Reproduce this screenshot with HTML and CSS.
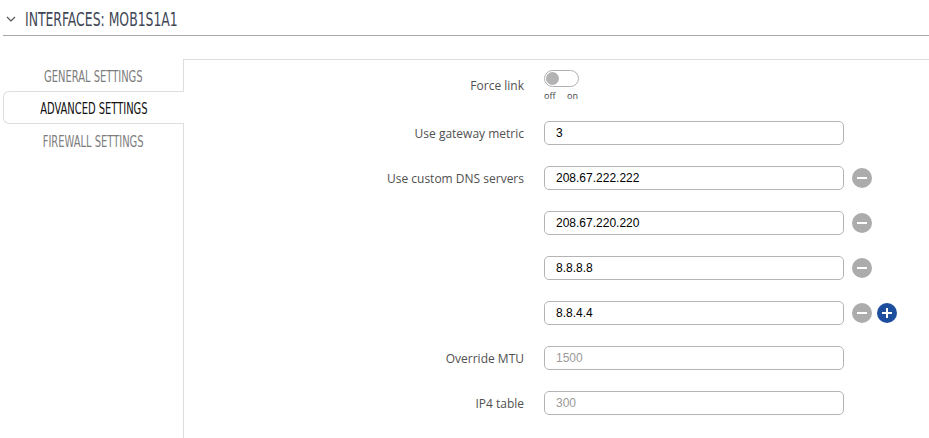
FILE: index.html
```html
<!DOCTYPE html>
<html><head><meta charset="UTF-8">
<title>Interfaces: mob1s1a1</title>
<link rel="stylesheet" href="styles.css">
</head>
<body>

<div class="header">
  <svg class="chevron" width="10" height="6" viewBox="0 0 10 6"><path d="M1 1 L5 5 L9 1" fill="none" stroke="#555" stroke-width="1.2"/></svg>
  <span class="title">INTERFACES: MOB1S1A1</span>
</div>

<div class="layout">
  <div class="tabs">
    <div class="tab"><span>GENERAL SETTINGS</span></div>
    <div class="tab tabActive"><span>ADVANCED SETTINGS</span></div>
    <div class="tab"><span>FIREWALL SETTINGS</span></div>
  </div>

  <div class="panel">
    <div class="row rowSwitch">
      <label class="label">Force link</label>
      <div class="switchBox">
        <div class="switch"><div class="knob"></div></div>
        <div class="switchText"><span>off</span><span>on</span></div>
      </div>
    </div>

    <div class="row">
      <label class="label">Use gateway metric</label>
      <input class="field" type="text" value="3">
    </div>

    <div class="row">
      <label class="label">Use custom DNS servers</label>
      <input class="field" type="text" value="208.67.222.222">
      <span class="btnMinus"></span>
    </div>
    <div class="row">
      <span class="label"></span>
      <input class="field" type="text" value="208.67.220.220">
      <span class="btnMinus"></span>
    </div>
    <div class="row">
      <span class="label"></span>
      <input class="field" type="text" value="8.8.8.8">
      <span class="btnMinus"></span>
    </div>
    <div class="row">
      <span class="label"></span>
      <input class="field" type="text" value="8.8.4.4">
      <span class="btnMinus"></span>
      <span class="btnPlus"></span>
    </div>

    <div class="row">
      <label class="label">Override MTU</label>
      <input class="field" type="text" placeholder="1500">
    </div>

    <div class="row">
      <label class="label">IP4 table</label>
      <input class="field" type="text" placeholder="300">
    </div>
  </div>
</div>

</body></html>
```

FILE: styles.css
```css
body {
  margin: 0;
  background: #fff;
  font-family: "Open Sans", "Liberation Sans", sans-serif;
  overflow: hidden;
}
.header {
  display: flex;
  align-items: center;
  height: 36px;
  margin-left: 3px;
  border-bottom: 1px solid #a8a8a8;
  box-sizing: border-box;
  padding-top: 2px;
}
.chevron {
  margin-left: 3px;
  margin-right: 9px;
}
.title {
  display: inline-block;
  font-family: "Liberation Sans Narrow", "DejaVu Sans Condensed", "DejaVu Sans", sans-serif;
  font-stretch: condensed;
  font-size: 20px;
  color: #3f4756;
  transform: scaleX(0.69);
  transform-origin: left center;
}
.layout {
  display: flex;
  margin-top: 23px;
}
.tabs {
  width: 180px;
  margin-left: 3px;
  flex-shrink: 0;
}
.tab {
  height: 32px;
  line-height: 36px;
  text-align: center;
  font-family: "Liberation Sans Narrow", "DejaVu Sans Condensed", "DejaVu Sans", sans-serif;
  font-stretch: condensed;
  font-size: 16px;
  color: #7d7d7d;
  white-space: nowrap;
}
.tab span {
  display: inline-block;
  transform: scaleX(0.69);
}
.tabActive {
  position: relative;
  height: 31px;
  line-height: 33px;
  margin-right: -1px;
  border: 1px solid #dedede;
  border-right: none;
  border-radius: 6px 0 0 6px;
  background: #fff;
  color: #111;
}
.panel {
  flex: 1;
  border-top: 1px solid #dedede;
  border-left: 1px solid #dedede;
  padding-top: 10px;
  min-height: 380px;
}
.row {
  display: flex;
  align-items: center;
  height: 24px;
  margin-bottom: 21px;
}
.rowSwitch {
  align-items: flex-start;
  height: 30px;
}
.rowSwitch .label {
  margin-top: 7px;
}
.label {
  width: 340px;
  margin-right: 20px;
  text-align: right;
  font-size: 12px;
  color: #505050;
}
.field {
  width: 300px;
  height: 24px;
  box-sizing: border-box;
  border: 1px solid #b4b4b4;
  border-radius: 5px;
  padding: 0 11px;
  font-family: "Liberation Sans", Arial, sans-serif;
  font-size: 12px;
  color: #000;
  outline: none;
}
.field::placeholder {
  color: #9a9a9a;
}
.switchBox {
  width: 36px;
}
.switch {
  width: 35px;
  height: 17px;
  box-sizing: border-box;
  border: 1px solid #b0b0b0;
  border-radius: 9px;
  position: relative;
}
.knob {
  position: absolute;
  left: 1px;
  top: 1px;
  width: 13px;
  height: 13px;
  border-radius: 50%;
  background: #b3b3b3;
}
.switchText {
  display: flex;
  justify-content: space-between;
  padding: 2px 2px 0 0;
  font-size: 9px;
  color: #444;
}
.btnMinus, .btnPlus {
  position: relative;
  width: 20px;
  height: 20px;
  border-radius: 50%;
  background: #acacac;
  margin-left: 8px;
}
.btnPlus {
  background: #1d4e9e;
  margin-left: 5px;
}
.btnMinus::before, .btnPlus::before {
  content: "";
  position: absolute;
  left: 5px;
  top: 9px;
  width: 10px;
  height: 2px;
  background: #fff;
}
.btnPlus::after {
  content: "";
  position: absolute;
  left: 9px;
  top: 5px;
  width: 2px;
  height: 10px;
  background: #fff;
}
```
